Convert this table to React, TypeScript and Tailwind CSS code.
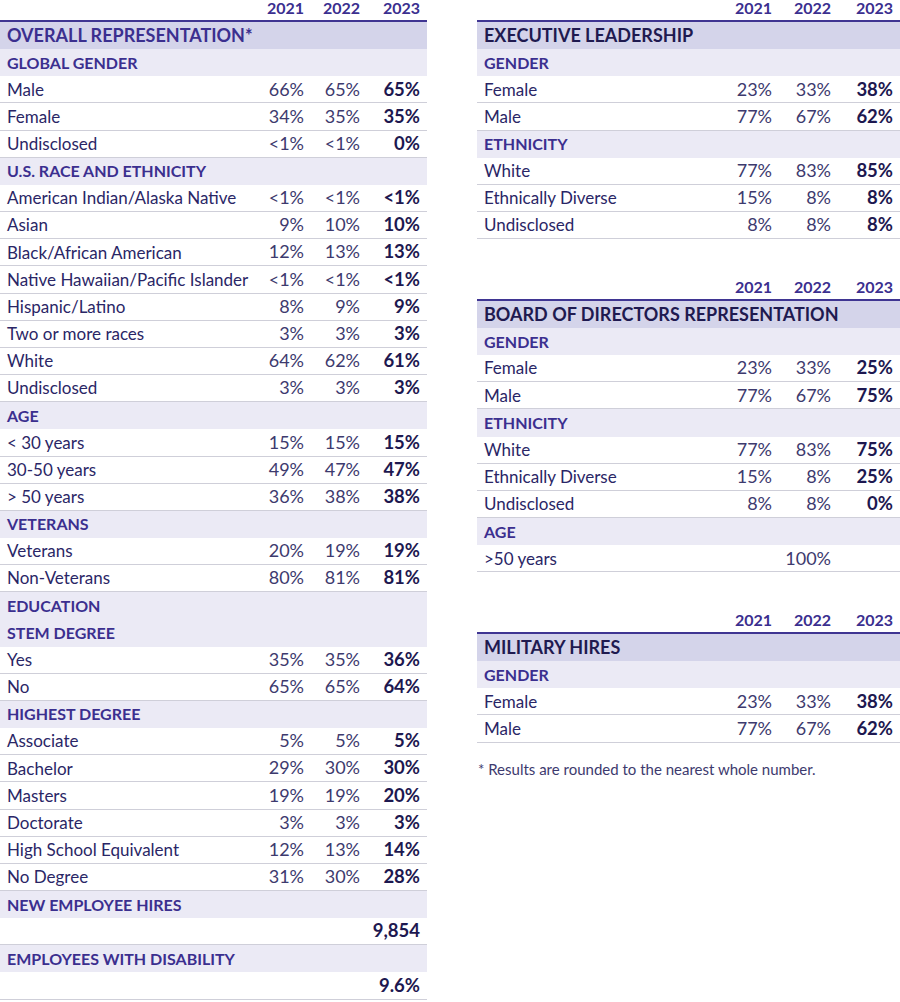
import clsx from "clsx";

type Row =
  | { kind: "section"; text: string }
  | { kind: "sub"; text: string }
  | { kind: "data"; label: string; v: [string, string, string] }
  | { kind: "total"; value: string };

const sec = (text: string): Row => ({ kind: "section", text });
const sub = (text: string): Row => ({ kind: "sub", text });
const row = (label: string, a: string, b: string, c: string): Row => ({
  kind: "data",
  label,
  v: [a, b, c],
});

const overall: Row[] = [
  sec("Overall Representation*"),
  sub("Global Gender"),
  row("Male", "66%", "65%", "65%"),
  row("Female", "34%", "35%", "35%"),
  row("Undisclosed", "<1%", "<1%", "0%"),
  sub("U.S. Race and Ethnicity"),
  row("American Indian/Alaska Native", "<1%", "<1%", "<1%"),
  row("Asian", "9%", "10%", "10%"),
  row("Black/African American", "12%", "13%", "13%"),
  row("Native Hawaiian/Pacific Islander", "<1%", "<1%", "<1%"),
  row("Hispanic/Latino", "8%", "9%", "9%"),
  row("Two or more races", "3%", "3%", "3%"),
  row("White", "64%", "62%", "61%"),
  row("Undisclosed", "3%", "3%", "3%"),
  sub("Age"),
  row("< 30 years", "15%", "15%", "15%"),
  row("30-50 years", "49%", "47%", "47%"),
  row("> 50 years", "36%", "38%", "38%"),
  sub("Veterans"),
  row("Veterans", "20%", "19%", "19%"),
  row("Non-Veterans", "80%", "81%", "81%"),
  sub("Education"),
  sub("STEM Degree"),
  row("Yes", "35%", "35%", "36%"),
  row("No", "65%", "65%", "64%"),
  sub("Highest Degree"),
  row("Associate", "5%", "5%", "5%"),
  row("Bachelor", "29%", "30%", "30%"),
  row("Masters", "19%", "19%", "20%"),
  row("Doctorate", "3%", "3%", "3%"),
  row("High School Equivalent", "12%", "13%", "14%"),
  row("No Degree", "31%", "30%", "28%"),
  sub("New Employee Hires"),
  { kind: "total", value: "9,854" },
  sub("Employees with Disability"),
  { kind: "total", value: "9.6%" },
];

const executive: Row[] = [
  sec("Executive Leadership"),
  sub("Gender"),
  row("Female", "23%", "33%", "38%"),
  row("Male", "77%", "67%", "62%"),
  sub("Ethnicity"),
  row("White", "77%", "83%", "85%"),
  row("Ethnically Diverse", "15%", "8%", "8%"),
  row("Undisclosed", "8%", "8%", "8%"),
];

const board: Row[] = [
  sec("Board of Directors Representation"),
  sub("Gender"),
  row("Female", "23%", "33%", "25%"),
  row("Male", "77%", "67%", "75%"),
  sub("Ethnicity"),
  row("White", "77%", "83%", "75%"),
  row("Ethnically Diverse", "15%", "8%", "25%"),
  row("Undisclosed", "8%", "8%", "0%"),
  sub("Age"),
  row(">50 years", "", "100%", ""),
];

const military: Row[] = [
  sec("Military Hires"),
  sub("Gender"),
  row("Female", "23%", "33%", "38%"),
  row("Male", "77%", "67%", "62%"),
];

// three right-aligned year columns; the right tables are a touch wider
function Cols({
  v,
  wide,
  className,
  boldLast = true,
}: {
  v: [string, string, string];
  wide?: boolean;
  className?: string;
  boldLast?: boolean;
}) {
  return (
    <div className={clsx("flex", className)}>
      <span className="text-right">{v[0]}</span>
      <span className={clsx("text-right", wide ? "w-[59px]" : "w-[56px]")}>{v[1]}</span>
      <span
        className={clsx(
          "text-right",
          wide ? "w-[62px]" : "w-[60px]",
          boldLast && "text-[18.5px] font-bold text-[#1d1850]"
        )}
      >
        {v[2]}
      </span>
    </div>
  );
}

function DataTable({
  rows,
  wide,
  purpleTitle,
  className,
}: {
  rows: Row[];
  wide?: boolean;
  purpleTitle?: boolean;
  className?: string;
}) {
  return (
    <div className={clsx("flex flex-col", className)}>
      <div className="flex h-[20px] items-start justify-end pr-[7px] text-[16px] font-bold leading-[16px] text-[#3b2f8f]">
        <Cols v={["2021", "2022", "2023"]} wide={wide} boldLast={false} />
      </div>
      <div className="border-t-2 border-[#3f3592]">
        {rows.map((r, i) => {
          if (r.kind === "section")
            return (
              <div
                key={i}
                className={clsx(
                  "flex h-[27.17px] items-center bg-[#d4d4ea] px-[7px] text-[18px] font-bold uppercase",
                  purpleTitle ? "text-[#3b2f8f]" : "text-[#1f1a50]"
                )}
              >
                {r.text}
              </div>
            );
          if (r.kind === "sub")
            return (
              <div
                key={i}
                className="flex h-[27.17px] items-center bg-[#ebeaf5] px-[7px] text-[16px] font-bold uppercase text-[#3b2f8f]"
              >
                {r.text}
              </div>
            );
          if (r.kind === "total")
            return (
              <div
                key={i}
                className="flex h-[27.17px] items-center justify-end border-b border-[#cfcfd9] px-[7px] text-[18.5px] font-bold text-[#1d1850]"
              >
                {r.value}
              </div>
            );
          return (
            <div
              key={i}
              className="flex h-[27.17px] items-center justify-between border-b border-[#cfcfd9] px-[7px] text-[17px]"
            >
              <span className="text-[#2a2666]">{r.label}</span>
              <Cols v={r.v} wide={wide} className="text-[18px] text-[#3d3a6e]" />
            </div>
          );
        })}
      </div>
    </div>
  );
}

export default function App() {
  return (
    <div className="flex h-[1002px] w-[900px] gap-[50px] overflow-hidden bg-white font-['Lato',sans-serif]">
      <DataTable rows={overall} purpleTitle className="w-[427px] shrink-0" />
      <div className="flex w-[423px] shrink-0 flex-col">
        <DataTable rows={executive} wide />
        <DataTable rows={board} wide className="mt-[39.6px]" />
        <DataTable rows={military} wide className="mt-[39.6px]" />
        <p className="mt-[15px] pl-[1px] text-[15px] text-[#3d3a6e]">
          * Results are rounded to the nearest whole number.
        </p>
      </div>
    </div>
  );
}
